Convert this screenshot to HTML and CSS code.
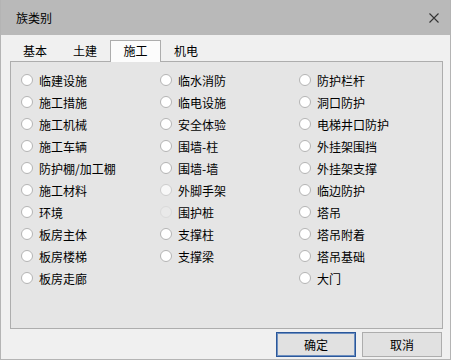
FILE: index.html
```html
<!DOCTYPE html>
<html lang="zh-CN">
<head>
    <meta charset="UTF-8">
    <title>族类别</title>
    <link rel="stylesheet" href="styles.css">
</head>
<body>
    <div class="dialog">
        <div class="titlebar">
            <span class="title">族类别</span>
            <svg class="close" width="10" height="10" viewBox="0 0 10 10">
                <path d="M0.5 0.5 L9.5 9.5 M9.5 0.5 L0.5 9.5" stroke="#333" stroke-width="1.1" fill="none"/>
            </svg>
        </div>

        <div class="tabs">
            <div class="tab">基本</div>
            <div class="tab">土建</div>
            <div class="tab active">施工</div>
            <div class="tab">机电</div>
        </div>

        <div class="panel">
            <div class="grid">
                <label class="item"><span class="radio"></span>临建设施</label>
                <label class="item"><span class="radio"></span>临水消防</label>
                <label class="item"><span class="radio"></span>防护栏杆</label>

                <label class="item"><span class="radio"></span>施工措施</label>
                <label class="item"><span class="radio"></span>临电设施</label>
                <label class="item"><span class="radio"></span>洞口防护</label>

                <label class="item"><span class="radio"></span>施工机械</label>
                <label class="item"><span class="radio"></span>安全体验</label>
                <label class="item"><span class="radio"></span>电梯井口防护</label>

                <label class="item"><span class="radio"></span>施工车辆</label>
                <label class="item"><span class="radio"></span>围墙-柱</label>
                <label class="item"><span class="radio"></span>外挂架围挡</label>

                <label class="item"><span class="radio"></span>防护棚/加工棚</label>
                <label class="item"><span class="radio"></span>围墙-墙</label>
                <label class="item"><span class="radio"></span>外挂架支撑</label>

                <label class="item"><span class="radio"></span>施工材料</label>
                <label class="item"><span class="radio light"></span>外脚手架</label>
                <label class="item"><span class="radio"></span>临边防护</label>

                <label class="item"><span class="radio"></span>环境</label>
                <label class="item"><span class="radio faint"></span>围护桩</label>
                <label class="item"><span class="radio"></span>塔吊</label>

                <label class="item"><span class="radio"></span>板房主体</label>
                <label class="item"><span class="radio"></span>支撑柱</label>
                <label class="item"><span class="radio"></span>塔吊附着</label>

                <label class="item"><span class="radio"></span>板房楼梯</label>
                <label class="item"><span class="radio"></span>支撑梁</label>
                <label class="item"><span class="radio"></span>塔吊基础</label>

                <label class="item"><span class="radio"></span>板房走廊</label>
                <span></span>
                <label class="item"><span class="radio"></span>大门</label>
            </div>
        </div>

        <div class="buttons">
            <button class="btn primary">确定</button>
            <button class="btn">取消</button>
        </div>
    </div>
</body>
</html>
```

FILE: styles.css
```css
body {
    margin: 0;
    font-family: "Noto Sans CJK SC", "Microsoft YaHei", sans-serif;
    font-size: 12px;
    color: #000;
}
.dialog {
    width: 451px;
    height: 360px;
    box-sizing: border-box;
    border: 1px solid #b4b4b4;
    border-top: none;
    background-color: #f0f0f0;
}
.titlebar {
    height: 35px;
    background-color: #b9b9b9;
    display: flex;
    align-items: center;
    justify-content: space-between;
    padding: 0 11px 0 15px;
}
.title {
    font-size: 12px;
    line-height: 12px;
}
.close {
    display: block;
}
.tabs {
    display: flex;
    margin: 5px 0 0 9px;
    height: 21px;
}
.tab {
    width: 50px;
    height: 21px;
    box-sizing: border-box;
    text-align: center;
    line-height: 21px;
}
.tab.active {
    width: 51px;
    background-color: #fcfcfc;
    border: 1px solid #adadad;
    border-bottom: none;
    height: 22px;
    line-height: 20px;
    position: relative;
    z-index: 1;
}
.panel {
    margin: 0 7px 0 9px;
    height: 268px;
    box-sizing: border-box;
    border: 1px solid #adadad;
    background-color: #e5e5e5;
    padding: 7px 0 0 10px;
}
.grid {
    display: grid;
    grid-template-columns: 139px 139px 139px;
    grid-auto-rows: 22px;
}
.item {
    display: flex;
    align-items: center;
    gap: 6px;
    white-space: nowrap;
}
.radio {
    width: 12px;
    height: 12px;
    box-sizing: border-box;
    border: 1px solid #b4b4b4;
    border-radius: 50%;
    background-color: #fff;
    flex: none;
}
.radio.light {
    border-color: #cdcdcd;
    background-color: #f8f8f8;
}
.radio.faint {
    border-color: #dadada;
    background-color: #e9e9e9;
}
.buttons {
    display: flex;
    justify-content: flex-end;
    gap: 6px;
    margin: 3px 8px 0 0;
}
.btn {
    width: 80px;
    height: 25px;
    font-family: inherit;
    font-size: 12px;
    color: #000;
    background-color: #e1e1e1;
    border: 1px solid #adadad;
    padding: 0;
}
.btn.primary {
    border-color: #2a579a;
    box-shadow: inset 0 0 0 1px #6d8fc0;
}
```
